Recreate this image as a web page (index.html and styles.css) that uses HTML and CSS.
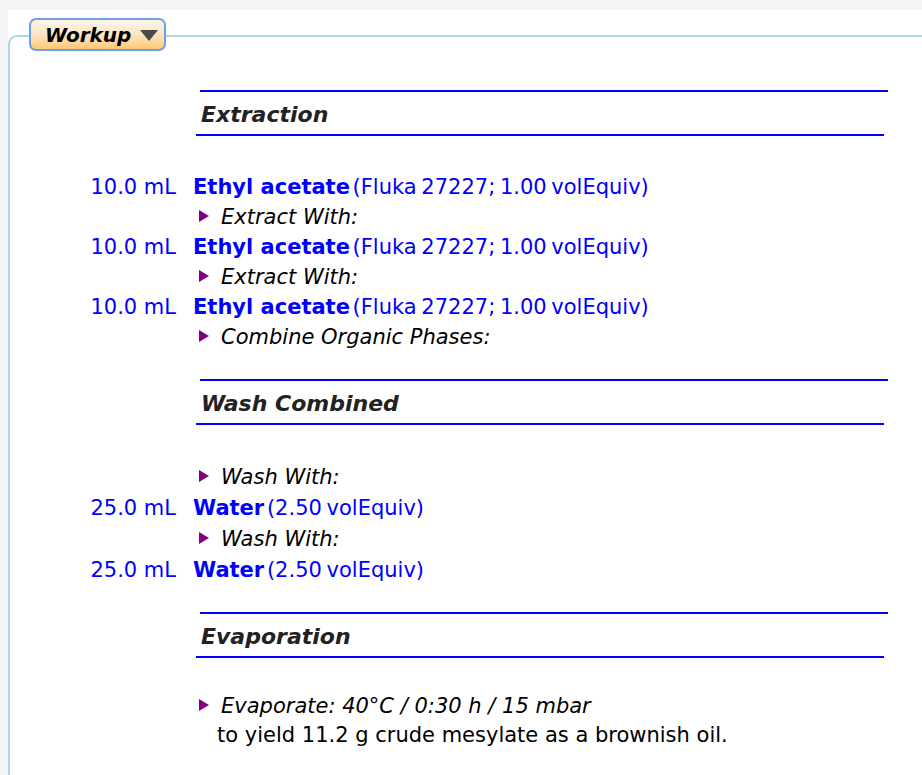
FILE: index.html
```html
<!DOCTYPE html>
<html>
<head>
<meta charset="utf-8">
<link rel="stylesheet" href="styles.css">
</head>
<body>
<div class="page">
  <div class="panel">
    <button class="tab"><span class="tab-label">Workup</span><svg class="caret" width="18" height="11" viewBox="0 0 18 11"><polygon points="0,0 18,0 9,11" fill="#4a4a4a"/></svg></button>
    <div class="content">
      <section class="sec">
        <div class="sec-head">
          <div class="rule rule-top"></div>
          <h3 class="sec-title">Extraction</h3>
          <div class="rule rule-bot"></div>
        </div>
        <div class="rows">
          <div class="row"><span class="amt">10.0 mL</span><span class="reagent"><b class="name">Ethyl acetate</b> <span class="info">(Fluka 27227; 1.00 volEquiv)</span></span></div>
          <div class="row"><span class="amt"></span><span class="step"><svg class="tri" width="10" height="12" viewBox="0 0 10 12"><polygon points="0,0 10,6 0,12" fill="#800080"/></svg><i>Extract With:</i></span></div>
          <div class="row"><span class="amt">10.0 mL</span><span class="reagent"><b class="name">Ethyl acetate</b> <span class="info">(Fluka 27227; 1.00 volEquiv)</span></span></div>
          <div class="row"><span class="amt"></span><span class="step"><svg class="tri" width="10" height="12" viewBox="0 0 10 12"><polygon points="0,0 10,6 0,12" fill="#800080"/></svg><i>Extract With:</i></span></div>
          <div class="row"><span class="amt">10.0 mL</span><span class="reagent"><b class="name">Ethyl acetate</b> <span class="info">(Fluka 27227; 1.00 volEquiv)</span></span></div>
          <div class="row"><span class="amt"></span><span class="step"><svg class="tri" width="10" height="12" viewBox="0 0 10 12"><polygon points="0,0 10,6 0,12" fill="#800080"/></svg><i>Combine Organic Phases:</i></span></div>
        </div>
      </section>
      <section class="sec">
        <div class="sec-head">
          <div class="rule rule-top"></div>
          <h3 class="sec-title">Wash Combined</h3>
          <div class="rule rule-bot"></div>
        </div>
        <div class="rows">
          <div class="row row-tall"><span class="amt"></span><span class="step"><svg class="tri" width="10" height="12" viewBox="0 0 10 12"><polygon points="0,0 10,6 0,12" fill="#800080"/></svg><i>Wash With:</i></span></div>
          <div class="row"><span class="amt">25.0 mL</span><span class="reagent"><b class="name">Water</b> <span class="info">(2.50 volEquiv)</span></span></div>
          <div class="row row-tall"><span class="amt"></span><span class="step"><svg class="tri" width="10" height="12" viewBox="0 0 10 12"><polygon points="0,0 10,6 0,12" fill="#800080"/></svg><i>Wash With:</i></span></div>
          <div class="row"><span class="amt">25.0 mL</span><span class="reagent"><b class="name">Water</b> <span class="info">(2.50 volEquiv)</span></span></div>
        </div>
      </section>
      <section class="sec sec-last">
        <div class="sec-head">
          <div class="rule rule-top"></div>
          <h3 class="sec-title">Evaporation</h3>
          <div class="rule rule-bot"></div>
        </div>
        <div class="rows">
          <div class="row row-short"><span class="amt"></span><span class="step"><svg class="tri" width="10" height="12" viewBox="0 0 10 12"><polygon points="0,0 10,6 0,12" fill="#800080"/></svg><i>Evaporate: 40°C / 0:30 h / 15 mbar</i></span></div>
          <div class="row"><span class="amt"></span><span class="note">to yield 11.2 g crude mesylate as a brownish oil.</span></div>
        </div>
      </section>
    </div>
  </div>
</div>
</body>
</html>
```

FILE: styles.css
```css
html, body {
  margin: 0;
  padding: 0;
  background: #f4f4f4;
  font-family: "DejaVu Sans", Verdana, sans-serif;
  overflow: hidden;
}

.page {
  margin: 10px 0 0 8px;
  background: #ffffff;
  height: 765px;
  padding-top: 25px;
  box-sizing: border-box;
}

.panel {
  position: relative;
  border-top: 2px solid #add8e6;
  border-left: 2px solid #add8e6;
  border-top-left-radius: 9px;
  height: 740px;
  box-sizing: border-box;
}

.tab {
  position: absolute;
  top: -19px;
  left: 19px;
  width: 137px;
  height: 33px;
  margin: 0;
  padding: 0 0 0 14px;
  box-sizing: border-box;
  border: 2px solid #6f9fe8;
  border-radius: 7px;
  background: linear-gradient(#fbf4ea 0%, #fce6c4 50%, #fec873 100%);
  display: flex;
  align-items: center;
  gap: 9px;
  font-family: "DejaVu Sans", Verdana, sans-serif;
  font-size: 20px;
  font-weight: bold;
  font-style: italic;
  color: #000;
}

.tab-label {
  line-height: 1;
}

.caret {
  display: block;
  margin-top: 1px;
}

.content {
  padding-top: 53px;
}

.sec + .sec .sec-head {
  margin-top: 27px;
}

.sec-last .sec-head {
  margin-top: 26px;
}

.rule {
  height: 2px;
  width: 688px;
  background: #0000ff;
}

.rule-top {
  margin-left: 190px;
}

.rule-bot {
  margin-left: 186px;
}

.sec-title {
  margin: 0;
  padding: 3px 0 0 191px;
  height: 42px;
  box-sizing: border-box;
  line-height: 39px;
  font-size: 22px;
  font-weight: bold;
  font-style: italic;
  color: #222222;
}

.rows {
  margin-top: 36px;
}

.sec-last .rows {
  margin-top: 33px;
}

.row {
  display: grid;
  grid-template-columns: 166px 1fr;
  column-gap: 17px;
  height: 30px;
  line-height: 30px;
  font-size: 21px;
  white-space: nowrap;
}

.row-tall {
  height: 32px;
}

.row-short {
  height: 29px;
}

.amt {
  text-align: right;
  color: #0000ff;
}

.reagent {
  color: #0000ff;
}

.name {
  font-weight: bold;
}

.info {
  margin-left: -4px;
  word-spacing: -2px;
}

.step {
  display: flex;
  align-items: center;
  padding-left: 6px;
  color: #000;
}

.tri {
  display: block;
  margin-right: 12px;
  margin-top: -3px;
}

.step i {
  font-style: italic;
}

.note {
  padding-left: 24px;
  color: #000;
}
```
